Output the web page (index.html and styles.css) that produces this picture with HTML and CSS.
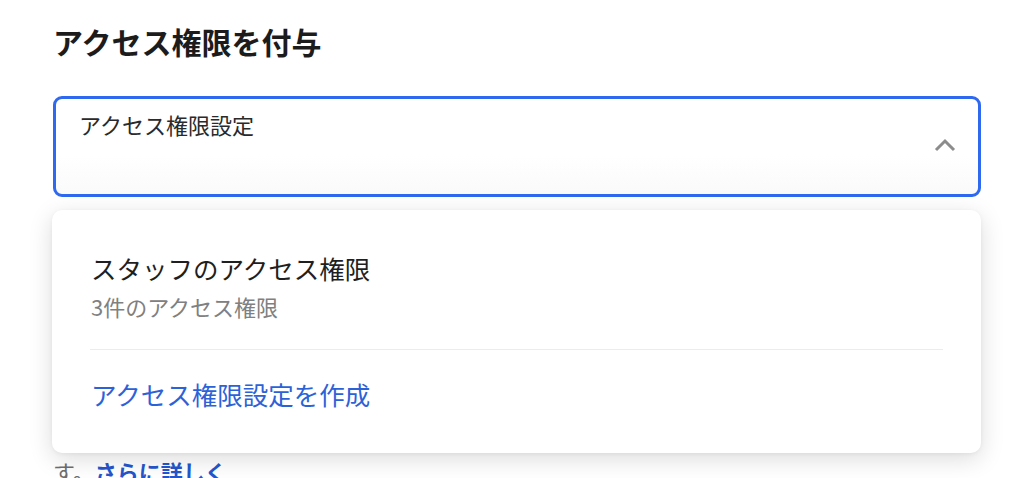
FILE: index.html
```html
<!DOCTYPE html>
<html lang="ja">
<head>
<meta charset="utf-8">
<link rel="stylesheet" href="styles.css">
</head>
<body>
<div class="page">
  <h1 class="title">アクセス権限を付与</h1>
  <div class="field">
    <div class="select">
      <span class="select-label">アクセス権限設定</span>
      <svg class="chevron" width="22" height="14" viewBox="0 0 22 14"><path d="M2 12 L11 3 L20 12" fill="none" stroke="#8c8c8c" stroke-width="3"/></svg>
    </div>
    <div class="menu">
      <div class="option">
        <div class="option-title">スタッフのアクセス権限</div>
        <div class="option-sub">3件のアクセス権限</div>
      </div>
      <div class="divider"></div>
      <div class="create">アクセス権限設定を作成</div>
    </div>
    <p class="help">す。<a class="more" href="#">さらに詳しく</a></p>
  </div>
</div>
</body>
</html>
```

FILE: styles.css
```css
html, body {
  margin: 0;
  padding: 0;
  background: #ffffff;
}
body {
  font-family: "Noto Sans CJK JP", "Noto Sans", sans-serif;
  color: #1f1f1f;
  overflow: hidden;
  height: 478px;
}
.page {
  padding: 22px 51px 0 53px;
}
.title {
  margin: 0;
  font-size: 30px;
  line-height: 39px;
  font-weight: 700;
  color: #1c1c1c;
}
.field {
  position: relative;
  margin-top: 35px;
}
.select {
  box-sizing: border-box;
  height: 101px;
  border: 3px solid #2e69ef;
  border-radius: 9px;
  background: linear-gradient(#ffffff 60%, #fafafa);
  display: flex;
  justify-content: space-between;
  align-items: flex-start;
  padding: 11px 22px 0 23px;
}
.select-label {
  font-size: 22px;
  line-height: 29px;
  color: #2a2a2a;
}
.chevron {
  margin-top: 28px;
}
.menu {
  position: absolute;
  top: 114px;
  left: -1px;
  right: 0;
  background: #ffffff;
  border-radius: 10px;
  box-shadow: 0 6px 24px rgba(0, 0, 0, 0.14), 0 1px 4px rgba(0, 0, 0, 0.05);
  padding: 40px 38px 42px 39px;
  z-index: 2;
}
.option-title {
  font-size: 25.5px;
  line-height: 35px;
  color: #1f1f1f;
}
.option-sub {
  margin-top: 7px;
  font-size: 22px;
  line-height: 29px;
  color: #808080;
}
.divider {
  height: 1px;
  background: #ececec;
  margin: 28px 0 26px -1px;
}
.create {
  font-size: 25.5px;
  line-height: 35px;
  color: #2c62d8;
}
.help {
  margin: 259px 0 0 0;
  font-size: 22px;
  line-height: 30px;
  color: #6e6e6e;
}
.more {
  color: #2456cc;
  font-weight: 700;
  text-decoration: none;
}
```
